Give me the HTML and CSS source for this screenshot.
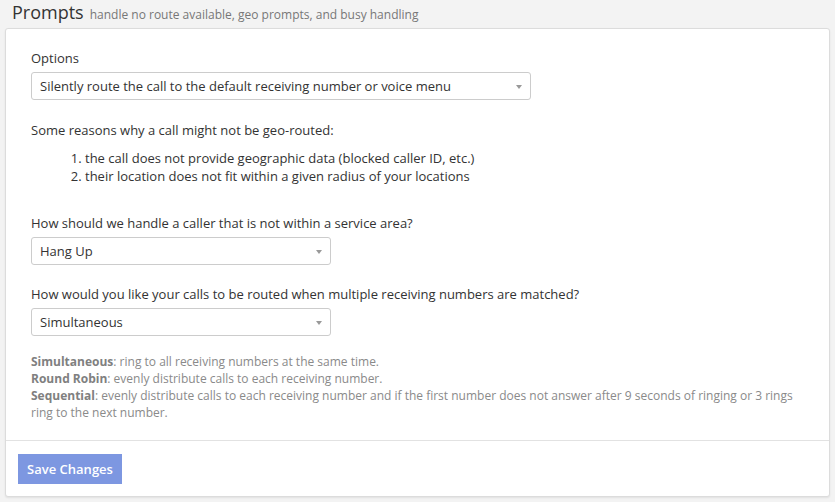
FILE: index.html
```html
<!DOCTYPE html>
<html>
<head>
<meta charset="utf-8">
<link rel="stylesheet" href="styles.css">
</head>
<body>
<div class="page-header">
  <h1 class="title">Prompts</h1>
  <span class="subtitle">handle no route available, geo prompts, and busy handling</span>
</div>
<div class="card">
  <div class="card-body">
    <div class="field">
      <label class="label">Options</label>
      <div class="select select-wide">
        <span class="select-text">Silently route the call to the default receiving number or voice menu</span>
        <span class="caret"></span>
      </div>
    </div>
    <p class="intro">Some reasons why a call might not be geo-routed:</p>
    <ol class="reasons">
      <li>the call does not provide geographic data (blocked caller ID, etc.)</li>
      <li>their location does not fit within a given radius of your locations</li>
    </ol>
    <div class="field field-gap">
      <label class="label">How should we handle a caller that is not within a service area?</label>
      <div class="select select-narrow">
        <span class="select-text">Hang Up</span>
        <span class="caret"></span>
      </div>
    </div>
    <div class="field field-gap2">
      <label class="label">How would you like your calls to be routed when multiple receiving numbers are matched?</label>
      <div class="select select-narrow">
        <span class="select-text">Simultaneous</span>
        <span class="caret"></span>
      </div>
    </div>
    <div class="help">
      <div class="help-line"><strong>Simultaneous</strong>: ring to all receiving numbers at the same time.</div>
      <div class="help-line"><strong>Round Robin</strong>: evenly distribute calls to each receiving number.</div>
      <div class="help-line"><strong>Sequential</strong>: evenly distribute calls to each receiving number and if the first number does not answer after 9 seconds of ringing or 3 rings ring to the next number.</div>
    </div>
  </div>
  <div class="card-footer">
    <button class="btn-save" type="button">Save Changes</button>
  </div>
</div>
</body>
</html>
```

FILE: styles.css
```css
html, body {
  margin: 0;
  padding: 0;
}
body {
  background: #f3f3f3;
  font-family: "Open Sans", "Liberation Sans", sans-serif;
  font-size: 13px;
  line-height: 18px;
  color: #333;
  width: 835px;
  height: 502px;
  overflow: hidden;
}
.page-header {
  display: flex;
  align-items: baseline;
  padding: 1px 12px 0;
  height: 22px;
}
.title {
  margin: 0;
  font-size: 18px;
  font-weight: 400;
  line-height: 22px;
  color: #333;
}
.subtitle {
  margin-left: 6px;
  font-size: 12px;
  color: #777;
}
.card {
  margin: 5px 5px 0 5px;
  background: #fff;
  border: 1px solid #dcdcdc;
  border-radius: 3px;
  box-shadow: 0 1px 2px rgba(0, 0, 0, 0.08);
}
.card-body {
  padding: 20px 25px 19px;
}
.field {
  display: flex;
  flex-direction: column;
  align-items: flex-start;
}
.label {
  display: block;
  margin-bottom: 5px;
}
.select {
  box-sizing: border-box;
  height: 28px;
  display: flex;
  align-items: center;
  padding: 0 8px 0 8px;
  border: 1px solid #ccc;
  border-radius: 3px;
  background: #fff;
  color: #333;
}
.select-wide {
  width: 500px;
}
.select-narrow {
  width: 300px;
}
.select-text {
  flex: 1;
  white-space: nowrap;
}
.caret {
  width: 0;
  height: 0;
  border-left: 3px solid transparent;
  border-right: 3px solid transparent;
  border-top: 4px solid #999;
  margin-top: 1px;
}
.intro {
  margin: 21px 0 10px;
}
.reasons {
  margin: 0;
  padding-left: 54px;
}
.field-gap {
  margin-top: 29px;
}
.field-gap2 {
  margin-top: 20px;
}
.help {
  margin-top: 17px;
  font-size: 12px;
  line-height: 17px;
  color: #8a8a8a;
}
.help strong {
  font-weight: 700;
  color: #808080;
}
.card-footer {
  border-top: 1px solid #e2e2e2;
  padding: 13px 12px 12px;
}
.btn-save {
  display: block;
  width: 104px;
  height: 30px;
  border: none;
  border-radius: 0;
  background: #7d97e1;
  color: #fff;
  font-family: "Open Sans", "Liberation Sans", sans-serif;
  font-size: 13px;
  font-weight: 600;
  padding: 0;
  cursor: pointer;
}
```
